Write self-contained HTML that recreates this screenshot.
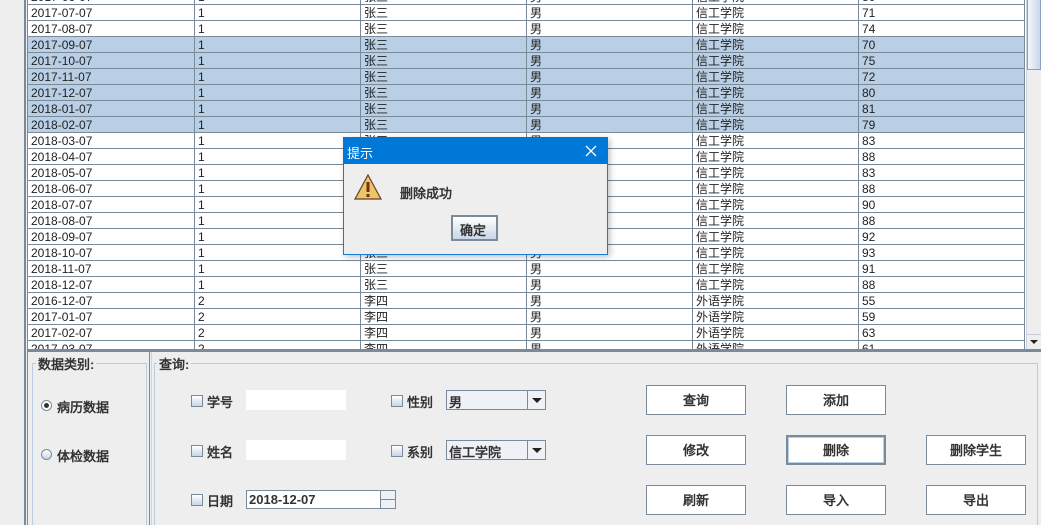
<!DOCTYPE html>
<html><head><meta charset="utf-8"><style>
*{margin:0;padding:0;box-sizing:border-box}
html{overflow:hidden;width:1041px;height:525px}
body{width:1041px;height:525px;overflow:hidden;background:#eeeeee;position:relative;font-family:"Liberation Sans","Noto Sans CJK SC",sans-serif;font-size:12px;color:#333}
.a{position:absolute}
#tbl{position:absolute;left:28px;top:0;width:998px;height:349px;overflow:hidden;background:#fff}
#rows{position:absolute;left:0;top:-11px}
.r{height:16px;border-bottom:1px solid #7a8a99;display:flex;white-space:nowrap}
.r div{width:166px;height:15px;line-height:17px;border-right:1px solid #7a8a99;padding-left:3px;overflow:hidden;color:#222;font-size:12px}
.r div:first-child{width:167px}
.s{background:#b8cfe5}
.b{font-weight:bold;font-family:"Liberation Sans","WenQuanYi Zen Hei",sans-serif;font-size:13px;color:#333}
.btn{position:absolute;width:100px;height:30px;border:1px solid #7a8a99;background:#fff;text-align:center;line-height:30px;font-weight:bold;font-size:13px;font-family:"Liberation Sans","WenQuanYi Zen Hei",sans-serif;color:#333}
.cb{position:absolute;width:12px;height:12px;border:1px solid #7a8a99;background:linear-gradient(#fff,#c8d6e6)}
.fld{position:absolute;background:#fff}
.combo{position:absolute;width:100px;height:20px;border:1px solid #7a8a99;background:#eef1f5}
.combo span{position:absolute;left:2px;top:1px;font-weight:bold;font-size:13px;font-family:"Liberation Sans","WenQuanYi Zen Hei",sans-serif}
.combo i{position:absolute;right:0;top:0;width:18px;height:18px;border-left:1px solid #7a8a99;background:#eef2f7}
.combo i:after{content:"";position:absolute;left:4px;top:7px;border-left:5px solid transparent;border-right:5px solid transparent;border-top:5px solid #222}
</style></head><body>
<div class="a" style="left:24px;top:0;width:2px;height:525px;background:#7a8a99"></div>
<div class="a" style="left:27px;top:0;width:1px;height:525px;background:#7a8a99"></div>
<div id="tbl"><div id="rows">
<div class="r"><div>2017-06-07</div><div>1</div><div>张三</div><div>男</div><div>信工学院</div><div>80</div></div>
<div class="r"><div>2017-07-07</div><div>1</div><div>张三</div><div>男</div><div>信工学院</div><div>71</div></div>
<div class="r"><div>2017-08-07</div><div>1</div><div>张三</div><div>男</div><div>信工学院</div><div>74</div></div>
<div class="r s"><div>2017-09-07</div><div>1</div><div>张三</div><div>男</div><div>信工学院</div><div>70</div></div>
<div class="r s"><div>2017-10-07</div><div>1</div><div>张三</div><div>男</div><div>信工学院</div><div>75</div></div>
<div class="r s"><div>2017-11-07</div><div>1</div><div>张三</div><div>男</div><div>信工学院</div><div>72</div></div>
<div class="r s"><div>2017-12-07</div><div>1</div><div>张三</div><div>男</div><div>信工学院</div><div>80</div></div>
<div class="r s"><div>2018-01-07</div><div>1</div><div>张三</div><div>男</div><div>信工学院</div><div>81</div></div>
<div class="r s"><div>2018-02-07</div><div>1</div><div>张三</div><div>男</div><div>信工学院</div><div>79</div></div>
<div class="r"><div>2018-03-07</div><div>1</div><div>张三</div><div>男</div><div>信工学院</div><div>83</div></div>
<div class="r"><div>2018-04-07</div><div>1</div><div>张三</div><div>男</div><div>信工学院</div><div>88</div></div>
<div class="r"><div>2018-05-07</div><div>1</div><div>张三</div><div>男</div><div>信工学院</div><div>83</div></div>
<div class="r"><div>2018-06-07</div><div>1</div><div>张三</div><div>男</div><div>信工学院</div><div>88</div></div>
<div class="r"><div>2018-07-07</div><div>1</div><div>张三</div><div>男</div><div>信工学院</div><div>90</div></div>
<div class="r"><div>2018-08-07</div><div>1</div><div>张三</div><div>男</div><div>信工学院</div><div>88</div></div>
<div class="r"><div>2018-09-07</div><div>1</div><div>张三</div><div>男</div><div>信工学院</div><div>92</div></div>
<div class="r"><div>2018-10-07</div><div>1</div><div>张三</div><div>男</div><div>信工学院</div><div>93</div></div>
<div class="r"><div>2018-11-07</div><div>1</div><div>张三</div><div>男</div><div>信工学院</div><div>91</div></div>
<div class="r"><div>2018-12-07</div><div>1</div><div>张三</div><div>男</div><div>信工学院</div><div>88</div></div>
<div class="r"><div>2016-12-07</div><div>2</div><div>李四</div><div>男</div><div>外语学院</div><div>55</div></div>
<div class="r"><div>2017-01-07</div><div>2</div><div>李四</div><div>男</div><div>外语学院</div><div>59</div></div>
<div class="r"><div>2017-02-07</div><div>2</div><div>李四</div><div>男</div><div>外语学院</div><div>63</div></div>
<div class="r"><div>2017-03-07</div><div>2</div><div>李四</div><div>男</div><div>外语学院</div><div>61</div></div>
</div></div>
<div class="a" style="left:1026px;top:0;width:15px;height:350px;background:#eeeeee;border-left:1px solid #c8d0da"></div>
<div class="a" style="left:1027px;top:0;width:14px;height:70px;background:linear-gradient(90deg,#f4f7fb,#c9d7e8);border:1px solid #8aa0bc;border-top:none"></div>
<div class="a" style="left:1027px;top:334px;width:14px;height:15px;background:#eeeeee;border-top:1px solid #c8d0da"></div>
<div class="a" style="left:1030px;top:340px;border-left:4px solid transparent;border-right:4px solid transparent;border-top:4px solid #222"></div>
<div class="a" style="left:28px;top:349px;width:1013px;height:3px;background:#7a8a99"></div>
<div class="a" style="left:149px;top:352px;width:1px;height:173px;background:#7a8a99"></div>
<div class="a" style="left:151px;top:352px;width:1px;height:173px;background:#c8d6e6"></div>
<div class="a" style="left:32px;top:363px;width:115px;height:170px;border:1px solid #b8cde2"></div>
<div class="a b" style="left:36px;top:354px;background:#eee;padding:0 2px">数据类别:</div>
<div class="a" style="left:41px;top:400px;width:11px;height:11px;border-radius:50%;border:1px solid #7a8a99;background:#fff"></div>
<div class="a" style="left:44px;top:403px;width:5px;height:5px;border-radius:50%;background:#333"></div>
<div class="a b" style="left:57px;top:397px">病历数据</div>
<div class="a" style="left:41px;top:449px;width:11px;height:11px;border-radius:50%;border:1px solid #7a8a99;background:linear-gradient(#fff,#c8d6e6)"></div>
<div class="a b" style="left:57px;top:446px">体检数据</div>
<div class="a" style="left:154px;top:363px;width:884px;height:170px;border:1px solid #b8cde2"></div>
<div class="a b" style="left:157px;top:354px;background:#eee;padding:0 2px">查询:</div>
<div class="cb" style="left:191px;top:395px"></div><div class="a b" style="left:207px;top:392px">学号</div>
<div class="fld" style="left:246px;top:390px;width:100px;height:20px"></div>
<div class="cb" style="left:191px;top:445px"></div><div class="a b" style="left:207px;top:442px">姓名</div>
<div class="fld" style="left:246px;top:440px;width:100px;height:20px"></div>
<div class="cb" style="left:191px;top:494px"></div><div class="a b" style="left:207px;top:491px">日期</div>
<div class="fld" style="left:246px;top:490px;width:135px;height:19px;border:1px solid #7a8a99"><span class="b" style="position:absolute;left:2px;top:1px">2018-12-07</span></div>
<div class="a" style="left:380px;top:490px;width:16px;height:19px;border:1px solid #7a8a99;background:#eef2f7"></div>
<div class="a" style="left:380px;top:499px;width:16px;height:1px;background:#7a8a99"></div>
<div class="cb" style="left:391px;top:395px"></div><div class="a b" style="left:407px;top:392px">性别</div>
<div class="combo" style="left:446px;top:390px;width:100px"><span>男</span><i></i></div>
<div class="cb" style="left:391px;top:445px"></div><div class="a b" style="left:407px;top:442px">系别</div>
<div class="combo" style="left:446px;top:440px;width:100px"><span>信工学院</span><i></i></div>
<div class="btn" style="left:646px;top:385px">查询</div>
<div class="btn" style="left:786px;top:385px">添加</div>
<div class="btn" style="left:646px;top:435px">修改</div>
<div class="btn" style="left:786px;top:435px;border:2px solid #7a8a99;box-shadow:inset 0 0 0 1px #b8cfe5;line-height:28px">删除</div>
<div class="btn" style="left:926px;top:435px">删除学生</div>
<div class="btn" style="left:646px;top:485px">刷新</div>
<div class="btn" style="left:786px;top:485px">导入</div>
<div class="btn" style="left:926px;top:485px">导出</div>
<div class="a" style="left:343px;top:137px;width:265px;height:118px;background:#eeeeee;border:1px solid #1a7bd4;box-shadow:2px 2px 6px rgba(0,0,0,.25)"></div>
<div class="a" style="left:343px;top:137px;width:265px;height:27px;background:#0078d7"></div>
<div class="a" style="left:347px;top:143px;color:#fff;font-size:13px">提示</div>
<svg class="a" style="left:584px;top:144px" width="14" height="14"><path d="M2 2L12 12M12 2L2 12" stroke="#fff" stroke-width="1.3"/></svg>
<svg class="a" style="left:354px;top:174px" width="30" height="28"><path d="M14 1L27 25H1Z" fill="#e8c864" stroke="#6a3a2a" stroke-width="1.2"/><rect x="12.5" y="8" width="3" height="10" fill="#7a2a1a"/><rect x="12.5" y="20" width="3" height="3" fill="#7a2a1a"/></svg>
<div class="a b" style="left:400px;top:183px">删除成功</div>
<div class="a" style="left:451px;top:215px;width:47px;height:26px;border:2px solid #7a8a99;background:linear-gradient(#fff,#c8d6e6)"></div>
<div class="a b" style="left:460px;top:220px">确定</div>
</body></html>
